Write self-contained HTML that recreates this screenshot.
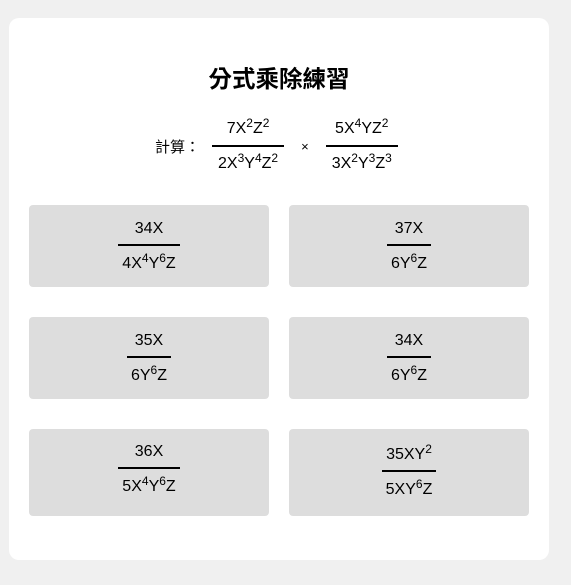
<!DOCTYPE html>
<html><head><meta charset="utf-8"><style>
*{margin:0;padding:0;box-sizing:border-box}
body{width:571px;height:585px;background:#f0f0f0;font-family:"Liberation Sans","Noto Sans CJK TC",sans-serif;color:#000;position:relative;overflow:hidden}
.card{position:absolute;left:9px;top:18px;width:540px;height:542px;background:#fff;border-radius:10px}
h1{position:absolute;top:62px;left:9px;width:540px;text-align:center;font-size:23.5px;font-weight:bold;line-height:30px;font-family:"Noto Sans CJK TC","Liberation Sans",sans-serif}
.frac{display:inline-flex;flex-direction:column;align-items:center;vertical-align:middle}
.frac .n{padding:0 4px;line-height:20px;font-size:16px;white-space:nowrap}
.frac .bar{height:2px;background:#000;align-self:stretch}
.frac .d{padding:0 4px;line-height:20px;font-size:16px;white-space:nowrap}
sup{font-size:12px;vertical-align:6px;line-height:0}
.calc{position:absolute;top:119px;left:155px;display:flex;align-items:center;font-size:15px}
.calc .lab{font-family:"Noto Sans CJK TC",sans-serif;margin-right:12px}
.calc .x{margin:0 17px;font-size:13px}
.calc .frac .n,.calc .frac .d{padding:0 6px}
.calc .frac .n{margin-bottom:6px}
.calc .frac .d{margin-top:7px}
.btn{position:absolute;width:240px;background:#ddd;border-radius:4px;display:flex;justify-content:center;align-items:center}
.btn .frac .n{margin-bottom:5px}
.btn .frac .d{margin-top:8px}
</style></head><body>
<div class="card"></div>
<h1>分式乘除練習</h1>
<div class="calc"><span class="lab">計算：</span>
<span class="frac"><span class="n">7X<sup>2</sup>Z<sup>2</sup></span><span class="bar"></span><span class="d">2X<sup>3</sup>Y<sup>4</sup>Z<sup>2</sup></span></span>
<span class="x">×</span>
<span class="frac"><span class="n">5X<sup>4</sup>YZ<sup>2</sup></span><span class="bar"></span><span class="d">3X<sup>2</sup>Y<sup>3</sup>Z<sup>3</sup></span></span>
</div>
<div class="btn" style="left:29px;top:205px;height:82px"><span class="frac"><span class="n">34X</span><span class="bar"></span><span class="d">4X<sup>4</sup>Y<sup>6</sup>Z</span></span></div>
<div class="btn" style="left:289px;top:205px;height:82px"><span class="frac"><span class="n">37X</span><span class="bar"></span><span class="d">6Y<sup>6</sup>Z</span></span></div>
<div class="btn" style="left:29px;top:317px;height:82px"><span class="frac"><span class="n">35X</span><span class="bar"></span><span class="d">6Y<sup>6</sup>Z</span></span></div>
<div class="btn" style="left:289px;top:317px;height:82px"><span class="frac"><span class="n">34X</span><span class="bar"></span><span class="d">6Y<sup>6</sup>Z</span></span></div>
<div class="btn" style="left:29px;top:429px;height:87px"><span class="frac" style="margin-top:-6px"><span class="n">36X</span><span class="bar"></span><span class="d">5X<sup>4</sup>Y<sup>6</sup>Z</span></span></div>
<div class="btn" style="left:289px;top:429px;height:87px"><span class="frac"><span class="n">35XY<sup>2</sup></span><span class="bar"></span><span class="d">5XY<sup>6</sup>Z</span></span></div>
</body></html>
